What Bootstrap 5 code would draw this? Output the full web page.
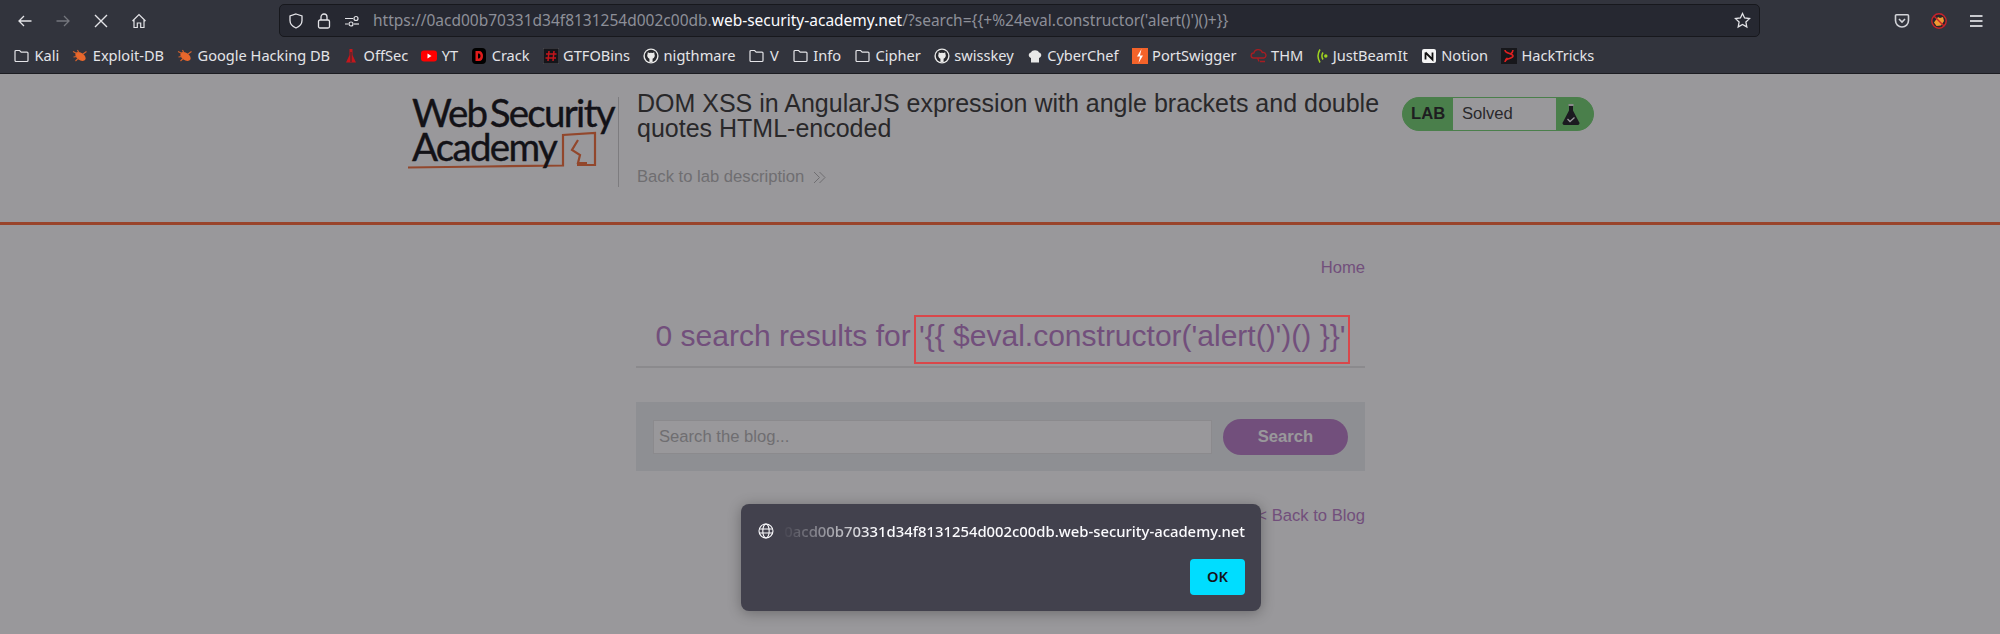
<!DOCTYPE html>
<html lang="en">
<head>
<meta charset="UTF-8">
<meta name="viewport" content="width=device-width, initial-scale=1.0">
<title>DOM XSS in AngularJS expression</title>
<link href="https://cdn.jsdelivr.net/npm/bootstrap@5.3.0/dist/css/bootstrap.min.css" rel="stylesheet">
<style>
html, body { height: 634px; overflow: hidden; margin: 0; background: #fff; }
.ff-chrome { background: #32343d; font-family: "Noto Sans", sans-serif; height: 74px; border-bottom: 1px solid #1c1d22; }
.ff-toolbar { height: 37px; padding-top: 4px; }
.ff-btn { position: relative; width: 38px; height: 32px; flex: none; }
.ff-nav { width: 279px; padding-left: 6px; flex: none; }
.ff-urlbar { width: 1481px; height: 33px; background: #262831; border: 1px solid #17181d; border-radius: 5px; padding: 0 8px 0 7px; font-size: 15.5px; color: #8d8f98; white-space: nowrap; flex: none; }
.ff-urlbar b { font-weight: 400; color: #fbfbfe; }
.ff-url-icons { width: 86px; gap: 13px; padding-left: 1px; flex: none; }
.ff-right { width: 240px; padding-left: 134px; gap: 21px; }
.ff-bookmarks { height: 36px; padding: 2px 0 0 13px; gap: 13px; font-size: 14.6px; color: #e4e4e8; white-space: nowrap; }
.ff-mark { gap: 4.5px; }
.ff-mark svg { flex: none; }
.page-area { position: relative; height: 560px; overflow: hidden; font-family: "Liberation Sans", Arial, sans-serif; color: #333332; }
.lab-head { height: 151px; border-bottom: 3px solid #ff6633; }
.lab-inner { width: 1188px; margin-left: 406px; }
.ws-logo { position: relative; width: 213px; height: 90px; margin-top: 23px; font-family: Lato, sans-serif; font-size: 38.5px; line-height: 34px; letter-spacing: -1.7px; word-spacing: -5px; color: #0c0c0f; padding-left: 6px; border-right: 1px solid #ccc; flex: none; white-space: nowrap; -webkit-text-stroke: .4px #0c0c0f; }
.ws-logo svg { position: absolute; left: 0; top: 0; }
.ws-logo-text { position: relative; display: block; margin-top: -2px; }
.lab-text { width: 781px; padding: 17px 0 0 18px; flex: none; }
.lab-title { font-size: 25px; line-height: 25px; margin: 0; font-weight: 400; }
.lab-back { display: block; margin-top: 24px; font-size: 16.64px; color: #b3b3b3; text-decoration: none; }
.lab-badge { width: 192px; height: 34px; margin-top: 23px; border-radius: 17px; background: #70d16d; border: 1px solid #70d16d; overflow: hidden; font-size: 16.64px; margin-left: 2px; }
.lab-badge-name { width: 50px; padding: 1px 0 0 8px; font-weight: 700; color: #1f1f1f; }
.lab-badge-state { width: 103px; background: #fff; padding: 1px 0 0 9px; color: #333; height: 100%; }
.lab-flask { padding-right: 7px; }
.blog-col { width: 729px; margin-left: 636px; }
.home-link { text-align: right; padding-top: 33px; line-height: 20px; }
.blog-link { color: #b87bc6; text-decoration: none; font-size: 16.64px; }
.result-head { color: #b87bc6; font-size: 30px; font-weight: 400; text-align: center; margin: 40px 0 0; padding-bottom: 12px; line-height: 36px; border-bottom: 2px solid #e6e6e6; white-space: nowrap; }
.search-box { background: #ebeef0; margin-top: 34px; height: 69px; padding: 16px 17px; gap: 11px; }
.search-field { width: 559px; height: 34px; background: #fff; border: 1px solid #e6e6e6; padding: 2px 5px 0; color: #b3b3b3; font-size: 16.64px; }
.search-btn { width: 125px; height: 36px; border-radius: 18px; background: #b87bc6; color: #fff; font-weight: 700; font-size: 16.64px; padding-top: 2px; }
.blog-back { text-align: right; margin-top: 35px; line-height: 20px; }
.dim-layer { position: absolute; inset: 0; background: rgba(28, 27, 34, .45); }
.note-box { position: absolute; left: 914px; top: 241px; width: 436px; height: 49px; border: 2px solid #d9474a; }
.ff-dialog { position: absolute; left: 741px; top: 430px; width: 520px; height: 107px; background: #42414d; border-radius: 8px; box-shadow: 0 2px 14px rgba(0,0,0,.3); font-family: "Noto Sans", sans-serif; color: #fbfbfe; padding: 16px 16px 16px 17px; }
.ff-dialog-host { font-size: 14.85px; font-weight: 500; line-height: 22px; gap: 7px; height: 22px; }
.ff-host-text { width: 465px; text-align: right; white-space: nowrap; overflow: hidden; -webkit-mask-image: linear-gradient(to right, transparent, #000 95px); mask-image: linear-gradient(to right, transparent, #000 95px); direction: rtl; }
.ff-ok { width: 55px; height: 36px; margin: 17px 0 0 auto; background: #00ddff; color: #15141a; border-radius: 4px; font-size: 14.6px; font-weight: 600; }
</style>
</head>
<body>
<svg width="0" height="0" class="d-block">
  <defs>
    <symbol id="i-folder" viewBox="0 0 16 16"><path d="M1.5 3.5a1 1 0 0 1 1-1h3.6l1.6 1.6h5.8a1 1 0 0 1 1 1v7.4a1 1 0 0 1-1 1h-11a1 1 0 0 1-1-1z" fill="none" stroke="#e4e4e8" stroke-width="1.2"/></symbol>
    <symbol id="i-bug" viewBox="0 0 16 16"><ellipse cx="8.500" cy="8.500" rx="5.800" ry="3.600" transform="rotate(35 8.500 8.500)" fill="#e8672c"/><path d="M1 3.500L5 5.500M5.500 2L7 5M1.500 9L5 8.500M3.500 13L6 10.500M14.500 3.500L11 6" stroke="#d9622b" stroke-width="1.100" fill="none"/></symbol>
    <symbol id="i-gh" viewBox="0 0 16 16"><circle cx="8" cy="8" r="7.6" fill="#e8e8e8"/><circle cx="8" cy="8" r="6.2" fill="#26272c"/><path d="M4.8 4.2l1.6.7a5 5 0 0 1 3.2 0l1.6-.7.3 2a3.3 3.3 0 0 1-1.9 4.5v3.4H6.4v-3.4a3.3 3.3 0 0 1-1.9-4.5z" fill="#e8e8e8"/></symbol>
  </defs>
</svg>

<div class="ff-chrome">
  <div class="ff-toolbar d-flex">
    <div class="ff-nav d-flex align-items-center">
      <div class="ff-btn d-flex align-items-center justify-content-center"><svg width="16" height="16" viewBox="0 0 16 16" fill="none" stroke="#e4e4e8" stroke-width="1.3"><path d="M14.5 8H2M7 3L2 8l5 5"/></svg></div>
      <div class="ff-btn d-flex align-items-center justify-content-center"><svg width="16" height="16" viewBox="0 0 16 16" fill="none" stroke="#74767d" stroke-width="1.3"><path d="M1.5 8H14M9 3l5 5-5 5"/></svg></div>
      <div class="ff-btn d-flex align-items-center justify-content-center"><svg width="16" height="16" viewBox="0 0 16 16" fill="none" stroke="#e4e4e8" stroke-width="1.4"><path d="M2 2l12 12M14 2L2 14"/></svg></div>
      <div class="ff-btn d-flex align-items-center justify-content-center"><svg width="16" height="16" viewBox="0 0 16 16" fill="none" stroke="#e4e4e8" stroke-width="1.2"><path d="M1.5 8L8 1.5 14.500 8M3 6.800V14.500H6.300V10H9.700V14.500H13V6.800"/></svg></div>
    </div>
    <div class="ff-urlbar d-flex align-items-center">
      <div class="ff-url-icons d-flex align-items-center">
        <svg width="16" height="16" viewBox="0 0 16 16" fill="none" stroke="#e4e4e8" stroke-width="1.3"><path d="M8 1l6 2v4.500c0 3.500-2.500 6-6 7.500-3.500-1.500-6-4-6-7.500V3z"/></svg>
        <svg width="14" height="16" viewBox="0 0 14 16" fill="none" stroke="#e4e4e8" stroke-width="1.3"><rect x="1.500" y="7" width="11" height="8" rx="1.500"/><path d="M4 7V4a3 3 0 0 1 6 0v3"/></svg>
        <svg width="16" height="16" viewBox="0 0 16 16" fill="none" stroke="#e4e4e8" stroke-width="1.200"><path d="M1 5.500h8M1 11h3"/><circle cx="12" cy="5.500" r="2"/><circle cx="7" cy="11" r="2"/><path d="M10 11h5"/></svg>
      </div>
      <span>https://0acd00b70331d34f8131254d002c00db.<b>web-security-academy.net</b>/?search={{+%24eval.constructor('alert()')()+}}</span>
      <svg class="ms-auto" width="17" height="17" viewBox="0 0 17 17" fill="none" stroke="#e4e4e8" stroke-width="1.300"><path d="M8.500 1.500l2.100 4.500 4.900.6-3.600 3.400.9 4.900-4.300-2.400-4.300 2.400.9-4.900L1.500 6.600 6.400 6z"/></svg>
    </div>
    <div class="ff-right d-flex align-items-center">
      <svg width="16" height="16" viewBox="0 0 16 16" fill="none" stroke="#d2d3d8" stroke-width="1.600"><path d="M2.500 1.800h11a1 1 0 0 1 1 1v4.700a6.500 6.500 0 0 1-13 0V2.800a1 1 0 0 1 1-1z"/><path d="M5 6l3 3 3-3"/></svg>
      <svg width="16" height="16" viewBox="0 0 16 16"><circle cx="8" cy="8" r="7.200" fill="#26272c" stroke="#c9232b" stroke-width="1.400"/><path d="M3 9.500L7 4l2 1 3-1 1 4-3 4.500-4.500.5z" fill="#ee9a33"/><path d="M3.200 3.200l9.600 9.600" stroke="#c9232b" stroke-width="1.400"/></svg>
      <svg width="16" height="16" viewBox="0 0 16 16" stroke="#c8c9ce" stroke-width="2"><path d="M2 3h12.500M2 8h12.500M2 13h12.500"/></svg>
    </div>
  </div>
  <div class="ff-bookmarks d-flex align-items-center">
    <span class="ff-mark d-flex align-items-center"><svg width="17" height="16"><use href="#i-folder"/></svg>Kali</span>
    <span class="ff-mark d-flex align-items-center"><svg width="16" height="16"><use href="#i-bug"/></svg>Exploit-DB</span>
    <span class="ff-mark d-flex align-items-center"><svg width="16" height="16"><use href="#i-bug"/></svg>Google Hacking DB</span>
    <span class="ff-mark d-flex align-items-center"><svg width="16" height="16" viewBox="0 0 16 16"><path d="M6.500 1h3v6l3.500 7.500H3L6.500 7z" fill="#c4161c"/><path d="M7.500 4h1v10h-1z" fill="#2a2a2e"/></svg>OffSec</span>
    <span class="ff-mark d-flex align-items-center"><svg width="16" height="16" viewBox="0 0 16 16"><rect y="2.500" width="16" height="11" rx="3" fill="#f00"/><path d="M6.500 5.500l4 2.500-4 2.500z" fill="#fff"/></svg>YT</span>
    <span class="ff-mark d-flex align-items-center"><svg width="16" height="16" viewBox="0 0 16 16"><rect x="1" y="0" width="14" height="16" rx="4" fill="#000"/><path d="M4.500 3h3.500c2.500 0 4 2 4 5s-1.500 5-4 5H4.500z" fill="#e01b1b"/><path d="M7 5.500v5h.8c1 0 1.700-1 1.700-2.500S8.800 5.500 7.800 5.500z" fill="#000"/></svg>Crack</span>
    <span class="ff-mark d-flex align-items-center"><svg width="16" height="16" viewBox="0 0 16 16"><rect width="16" height="16" fill="#15151a" stroke="#55555a"/><path d="M6 3L5 13M11 3l-1 10M3 6h10.500M2.500 10H13" stroke="#c4161c" stroke-width="1.500"/></svg>GTFOBins</span>
    <span class="ff-mark d-flex align-items-center"><svg width="16" height="16"><use href="#i-gh"/></svg>nigthmare</span>
    <span class="ff-mark d-flex align-items-center"><svg width="17" height="16"><use href="#i-folder"/></svg>V</span>
    <span class="ff-mark d-flex align-items-center"><svg width="17" height="16"><use href="#i-folder"/></svg>Info</span>
    <span class="ff-mark d-flex align-items-center"><svg width="17" height="16"><use href="#i-folder"/></svg>Cipher</span>
    <span class="ff-mark d-flex align-items-center"><svg width="16" height="16"><use href="#i-gh"/></svg>swisskey</span>
    <span class="ff-mark d-flex align-items-center"><svg width="16" height="16" viewBox="0 0 16 16"><path d="M4 10C1 9 1 5 4 4.500 5 1.500 11 1.500 12 4.500c3 .5 3 4.500 0 5.500v4.500H4z" fill="#e8e8e8"/></svg>CyberChef</span>
    <span class="ff-mark d-flex align-items-center"><svg width="16" height="16" viewBox="0 0 16 16"><rect width="16" height="16" fill="#f4632a"/><path d="M9.500 1L5 8.500h3L6.500 15l4.500-7.500H8z" fill="#fff"/></svg>PortSwigger</span>
    <span class="ff-mark d-flex align-items-center"><svg width="17" height="16" viewBox="0 0 17 16" fill="none" stroke="#a81c22" stroke-width="1.300"><path d="M3.500 10a2.500 2.500 0 0 1 .3-5A4.500 4.500 0 0 1 12.300 4.500a2.800 2.800 0 0 1 1.500 5.500H3.500zM7.500 10l1.500 3.500M10 13.500h5"/></svg>THM</span>
    <span class="ff-mark d-flex align-items-center"><svg width="12" height="16" viewBox="0 0 12 16" fill="none" stroke="#9fd420" stroke-width="1.500"><path d="M4 1.500Q0 8 4 14.500M7 4.500Q4.800 8 7 11.500"/><circle cx="9.800" cy="8" r="1" fill="#9fd420"/></svg>JustBeamIt</span>
    <span class="ff-mark d-flex align-items-center"><svg width="16" height="16" viewBox="0 0 16 16"><rect x="1" y="1" width="14" height="14" rx="2" fill="#f4f4f4"/><path d="M4.500 4.500v7M4.500 4.500l7 7v-7" stroke="#111" stroke-width="1.800" fill="none"/></svg>Notion</span>
    <span class="ff-mark d-flex align-items-center"><svg width="16" height="16" viewBox="0 0 16 16"><rect width="16" height="16" fill="#17171b"/><path d="M4 2c0 4 8 3 8 6s-8 2-8 6M12 2c0 2-1 3-2.500 4M4 14c0-1 1-3 2.500-4" stroke="#e02020" stroke-width="1.600" fill="none"/></svg>HackTricks</span>
  </div>
</div>

<div class="page-area">
  <div class="lab-head">
    <div class="lab-inner d-flex">
      <div class="ws-logo">
        <svg width="213" height="90" viewBox="0 0 213 90" fill="none" stroke="#f26c35" stroke-width="2.200"><path d="M2 70.500c50-1 105-1 155-2V38l32-2V68h-18"/><path d="M172 43l-6 10 8 5-2 8h9"/></svg>
        <span class="ws-logo-text">Web Security<br>Academy</span>
      </div>
      <div class="lab-text">
        <h2 class="lab-title">DOM XSS in AngularJS expression with angle brackets and double quotes HTML-encoded</h2>
        <a class="lab-back">Back to lab description
          <svg class="ms-1" width="13" height="13" viewBox="0 0 13 13" fill="none" stroke="#b3b3b3" stroke-width="1"><path d="M1 1l5.500 5.500L1 12M6.500 1L12 6.500 6.500 12"/></svg>
        </a>
      </div>
      <div class="lab-badge d-flex align-items-center">
        <div class="lab-badge-name">LAB</div>
        <div class="lab-badge-state d-flex align-items-center">Solved</div>
        <div class="lab-flask flex-grow-1 d-flex justify-content-center">
          <svg width="18" height="22" viewBox="0 0 18 22"><path d="M6.500 1h5v2h-5z" fill="#e6e6e6"/><path d="M7 3h4v4.500L17 19a1.800 1.800 0 0 1-1.500 3h-13A1.800 1.800 0 0 1 1 19L7 7.500z" fill="#1b1b1f"/><path d="M5.500 16l2.500 2.500 4.500-4" stroke="#fff" stroke-width="1.300" fill="none"/></svg>
        </div>
      </div>
    </div>
  </div>

  <div class="blog-col">
    <div class="home-link"><a class="blog-link">Home</a></div>
    <h1 class="result-head">0 search results for '{{ $eval.constructor('alert()')() }}'</h1>
    <div class="search-box d-flex align-items-center">
      <div class="search-field d-flex align-items-center">Search the blog...</div>
      <div class="search-btn d-flex align-items-center justify-content-center">Search</div>
    </div>
    <div class="blog-back"><a class="blog-link">&lt; Back to Blog</a></div>
  </div>

  <div class="dim-layer"></div>
  <div class="note-box"></div>

  <div class="ff-dialog">
    <div class="ff-dialog-host d-flex align-items-center">
      <svg class="flex-none" width="16" height="16" viewBox="0 0 16 16" fill="none" stroke="#fbfbfe" stroke-width="1.100"><circle cx="8" cy="8" r="7"/><ellipse cx="8" cy="8" rx="3.200" ry="7"/><path d="M1 6h14M1 10h14" stroke-width="1"/></svg>
      <div class="ff-host-text"><bdi>0acd00b70331d34f8131254d002c00db.web-security-academy.net</bdi></div>
    </div>
    <div class="ff-ok d-flex align-items-center justify-content-center">OK</div>
  </div>
</div>
<script src="https://cdn.jsdelivr.net/npm/bootstrap@5.3.0/dist/js/bootstrap.bundle.min.js"></script>
</body>
</html>
